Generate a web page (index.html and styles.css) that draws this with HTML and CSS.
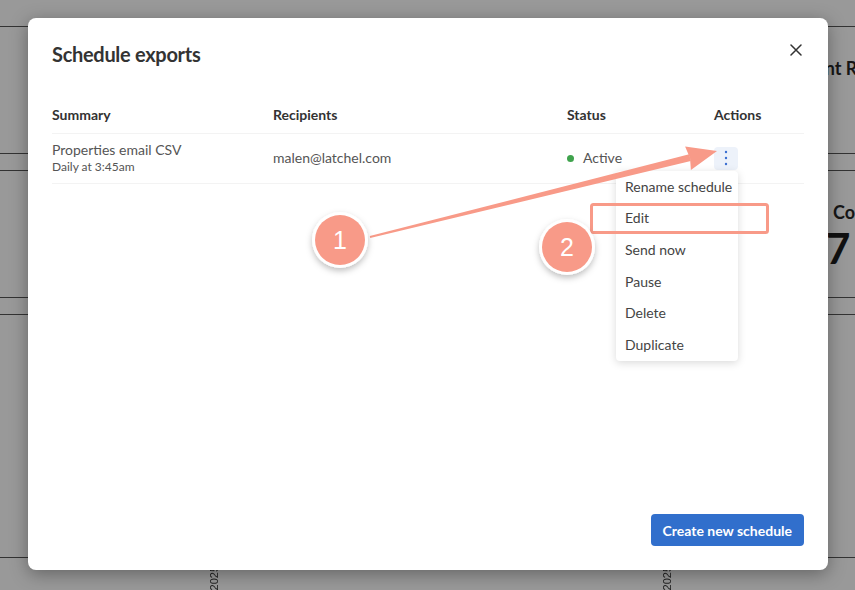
FILE: index.html
```html
<!DOCTYPE html>
<html lang="en">
<head>
<meta charset="utf-8">
<title>Schedule exports</title>
<link rel="stylesheet" href="styles.css">
</head>
<body>
<div class="bg">
  <div class="bg-strip"></div>
  <div class="bg-card bg-card-1">
    <span class="bg-title">Urgent Requests</span>
  </div>
  <div class="bg-card bg-card-2">
    <div class="bg-stat"><span class="bg-icon"></span><span class="bg-stat-label">Completed</span></div>
    <div class="bg-stat-num">7</div>
  </div>
  <div class="bg-card bg-card-3"></div>
  <div class="bg-axis">
    <span class="axis-label">Jan 2025</span>
    <span class="axis-label">Jun 2025</span>
  </div>
</div>

<div class="modal">
  <button class="close" aria-label="Close">
    <svg width="12" height="12" viewBox="0 0 12 12"><path d="M1 1 L11 11 M11 1 L1 11" stroke="#333" stroke-width="1.5" stroke-linecap="round"/></svg>
  </button>
  <h2 class="modal-title">Schedule exports</h2>
  <div class="table">
    <div class="tr th">
      <div>Summary</div>
      <div>Recipients</div>
      <div>Status</div>
      <div>Actions</div>
    </div>
    <div class="tr row">
      <div class="summary">
        <div class="name">Properties email CSV</div>
        <div class="freq">Daily at 3:45am</div>
      </div>
      <div class="cell">malen@latchel.com</div>
      <div class="cell status"><span class="dot"></span>Active</div>
      <div class="cell actions">
        <div class="kebab-wrap">
          <button class="kebab" aria-label="Actions">
            <svg width="4" height="16" viewBox="0 0 4 16"><circle cx="2" cy="2" r="1.2" fill="#3a6fd1"/><circle cx="2" cy="8" r="1.2" fill="#3a6fd1"/><circle cx="2" cy="14" r="1.2" fill="#3a6fd1"/></svg>
          </button>
          <ul class="menu">
            <li>Rename schedule</li>
            <li>Edit</li>
            <li>Send now</li>
            <li>Pause</li>
            <li>Delete</li>
            <li>Duplicate</li>
          </ul>
        </div>
      </div>
    </div>
  </div>
  <div class="footer">
    <button class="primary">Create new schedule</button>
  </div>
</div>

<svg class="annotations" width="855" height="590" viewBox="0 0 855 590">
  <defs>
    <filter id="sh" x="-30%" y="-30%" width="160%" height="170%">
      <feDropShadow dx="0" dy="3" stdDeviation="3" flood-color="#000" flood-opacity="0.25"/>
    </filter>
  </defs>
  <polygon points="369.8,236 689.2,154.3 690.8,161.1 370.2,238" fill="#f89a88"/>
  <polygon points="717,151 685.1,146.5 690,158 690.9,169.9" fill="#f89a88"/>
  <rect x="591.5" y="204.5" width="176" height="28" rx="2" fill="none" stroke="#f89a88" stroke-width="3"/>
  <g filter="url(#sh)">
    <circle cx="340" cy="240" r="28" fill="#fff"/>
    <circle cx="567" cy="247" r="28" fill="#fff"/>
  </g>
  <circle cx="340" cy="240" r="25" fill="#f89a88"/>
  <circle cx="567" cy="247" r="25" fill="#f89a88"/>
  <text x="340" y="249" class="num">1</text>
  <text x="567" y="256" class="num">2</text>
</svg>
</body>
</html>
```

FILE: styles.css
```css
* { box-sizing: border-box; }
html, body { margin: 0; padding: 0; }
body {
  width: 855px;
  height: 590px;
  overflow: hidden;
  background: #999999;
  font-family: Lato, "Liberation Sans", sans-serif;
  position: relative;
}

/* background page (dimmed) */
.bg { width: 855px; }
.bg-strip { height: 27px; border-bottom: 1px solid #333; }
.bg-card { border-bottom: 1px solid #333; }
.bg-card-1 { height: 127px; padding: 29px 0 0 786px; white-space: nowrap; }
.bg-card-2 { height: 128px; margin-top: 16px; border-top: 1px solid #333; padding: 29px 0 0 812px; }
.bg-card-3 { height: 244px; margin-top: 16px; border-top: 1px solid #333; }
.bg-title { font-size: 18px; line-height: 24px; font-weight: 700; color: #161616; }
.bg-stat { display: flex; align-items: center; gap: 5px; white-space: nowrap; }
.bg-icon { width: 16px; height: 16px; border-radius: 50%; background: #222; flex: none; }
.bg-stat-label { font-size: 18px; line-height: 24px; font-weight: 700; color: #161616; }
.bg-stat-num { font-size: 42px; line-height: 40px; font-weight: 700; color: #111; margin-top: 4px; padding-left: 14px; }
.bg-axis { display: flex; gap: 441px; padding-left: 208px; padding-top: 8px; }
.axis-label {
  writing-mode: vertical-rl;
  transform: rotate(180deg);
  font-family: "Liberation Sans", sans-serif;
  font-size: 11px;
  color: #222;
}

/* modal */
.modal {
  position: absolute;
  left: 28px;
  top: 18px;
  width: 800px;
  height: 552px;
  background: #fff;
  border-radius: 8px;
  box-shadow: 0 4px 18px rgba(0,0,0,0.35);
  padding: 22px 24px 24px;
  display: flex;
  flex-direction: column;
}
.close {
  position: absolute;
  top: 20px;
  right: 20px;
  width: 24px;
  height: 24px;
  border: 0;
  background: none;
  padding: 0;
  display: flex;
  align-items: center;
  justify-content: center;
}
.modal-title {
  margin: 0 0 37px;
  font-size: 20px;
  line-height: 28px;
  font-weight: 700;
  letter-spacing: -0.3px;
  color: #333;
}
.tr {
  display: grid;
  grid-template-columns: 221px 294px 147px 1fr;
  border-bottom: 1px solid #f3f3f3;
}
.th {
  font-size: 14px;
  line-height: 20px;
  font-weight: 700;
  color: #333;
  padding-bottom: 8px;
}
.row {
  padding: 7px 0 8px;
  font-size: 14px;
  color: #555;
  align-items: center;
}
.name { font-size: 14px; line-height: 18px; }
.freq { font-size: 12px; line-height: 16px; }
.cell { line-height: 18px; }
.status { display: flex; align-items: center; gap: 9px; }
.dot { width: 7px; height: 7px; border-radius: 50%; background: #3fa34d; }
.kebab-wrap { position: relative; width: 24px; }
.kebab {
  width: 24px;
  height: 23px;
  border: 0;
  border-radius: 4px;
  background: #edf2fa;
  padding: 0;
  display: flex;
  align-items: center;
  justify-content: center;
}
.menu {
  position: absolute;
  right: 0;
  top: 24px;
  width: 122px;
  margin: 0;
  padding: 0;
  list-style: none;
  background: #fff;
  border-radius: 4px;
  box-shadow: 0 2px 8px rgba(0,0,0,0.15);
  z-index: 2;
}
.menu li {
  height: 31.7px;
  line-height: 31.7px;
  padding-left: 9px;
  font-size: 14px;
  color: #444;
  white-space: nowrap;
}
.footer { margin-top: auto; display: flex; justify-content: flex-end; }
.primary {
  height: 32px;
  padding: 0 12px;
  border: 0;
  border-radius: 4px;
  background: #316fcc;
  color: #fff;
  font-family: Lato, "Liberation Sans", sans-serif;
  font-size: 14px;
  font-weight: 700;
}

/* annotation overlay */
.annotations {
  position: absolute;
  left: 0;
  top: 0;
  z-index: 5;
  pointer-events: none;
}
.num {
  font-family: "Liberation Sans", sans-serif;
  font-size: 25px;
  fill: #fff;
  text-anchor: middle;
}
```
